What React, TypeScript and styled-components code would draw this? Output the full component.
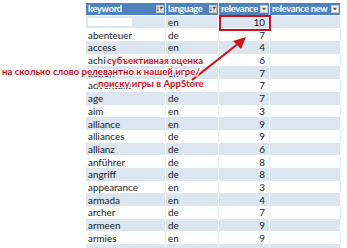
import React from 'react';
import styled, { createGlobalStyle } from 'styled-components';

const GlobalStyle = createGlobalStyle`
    html, body {
        margin: 0;
        padding: 0;
        background: #ffffff;
    }
`;

const PageStyle = styled.div`
    position: relative;
    width: 347px;
    height: 248px;
    overflow: hidden;
    background: #ffffff;
    padding: 3px 0 0 86px;
    box-sizing: border-box;
    font-family: 'Lato', 'Liberation Sans', sans-serif;
`;

const TableStyle = styled.div`
    display: grid;
    grid-template-columns: 80px 53px 51px 71px;
    grid-auto-rows: 12.7px;
    width: 255px;
`;

const HeadCellStyle = styled.div`
    display: flex;
    align-items: center;
    justify-content: space-between;
    background-color: #4f81bd;
    color: #ffffff;
    font-weight: 700;
    font-size: 9.3px;
    letter-spacing: -0.3px;
    padding: 0 1px 0 2px;
    border-right: 1px solid #ffffff;
    border-bottom: 1px solid #ffffff;
    white-space: nowrap;
    overflow: hidden;
`;

const FilterBoxStyle = styled.span`
    display: flex;
    align-items: center;
    justify-content: center;
    width: 8px;
    height: 8px;
    flex: 0 0 8px;
    margin-left: 1px;
    background: #f4f4f4;
    border: 1px solid #c6c6c6;
    box-sizing: border-box;
`;

const CellStyle = styled.div<{ $band: boolean; $num?: boolean }>`
    display: flex;
    align-items: center;
    justify-content: ${(p) => (p.$num ? 'flex-end' : 'flex-start')};
    background-color: ${(p) => (p.$band ? '#dce6f1' : '#ffffff')};
    border-right: 1px solid ${(p) => (p.$band ? '#ffffff' : '#e8eef6')};
    color: #1a1a1a;
    font-size: 9.9px;
    padding: ${(p) => (p.$num ? '0 4px 0 0' : '0 0 0 2px')};
    white-space: nowrap;
    overflow: hidden;
`;

const MaskStyle = styled.span`
    display: inline-block;
    width: 44px;
    height: 8px;
    background: #ffffff;
`;

const RedBoxStyle = styled.div`
    position: absolute;
    left: 219px;
    top: 15px;
    width: 52px;
    height: 16px;
    border: 2.5px solid #c4161c;
    box-sizing: border-box;
`;

const NoteStyle = styled.div<{ $left: number; $top: number }>`
    position: absolute;
    left: ${(p) => p.$left}px;
    top: ${(p) => p.$top}px;
    color: #d2121b;
    font-family: 'Lato', 'Liberation Sans', sans-serif;
    font-weight: 700;
    font-size: 9.6px;
    line-height: 11px;
    white-space: nowrap;
    text-shadow:
        1px 0 0 #fff, -1px 0 0 #fff, 0 1px 0 #fff, 0 -1px 0 #fff,
        1px 1px 0 #fff, -1px -1px 0 #fff, 1px -1px 0 #fff, -1px 1px 0 #fff;
`;

const ArrowStyle = styled.svg`
    position: absolute;
    left: 0;
    top: 0;
    pointer-events: none;
`;

type Row = [string, string, number];

const rows: Row[] = [
    ['', 'en', 10],
    ['abenteuer', 'de', 7],
    ['access', 'en', 4],
    ['achievement', 'en', 6],
    ['action', 'en', 7],
    ['adventure', 'de', 7],
    ['age', 'de', 7],
    ['aim', 'en', 3],
    ['alliance', 'en', 9],
    ['alliances', 'de', 9],
    ['allianz', 'de', 6],
    ['anführer', 'de', 8],
    ['angriff', 'de', 8],
    ['appearance', 'en', 3],
    ['armada', 'en', 4],
    ['archer', 'de', 7],
    ['armeen', 'de', 9],
    ['armies', 'en', 9],
    ['', '', 0],
];

const SortFilterIcon = () => (
    <svg width="6" height="6" viewBox="0 0 6 6">
        <path d="M1 0.5 V5 M0 4 L1 5.3 L2 4" stroke="#555" strokeWidth="0.8" fill="none" />
        <path d="M2.8 1 H5.8 L4.3 3 Z M4 3 V5.5" stroke="#555" strokeWidth="0.7" fill="#555" />
    </svg>
);

const DropIcon = () => (
    <svg width="6" height="6" viewBox="0 0 6 6">
        <path d="M0.8 1.8 H5.2 L3 4.4 Z" fill="#555" />
    </svg>
);

const headers: { title: string; icon: React.ReactNode }[] = [
    { title: 'keyword', icon: <SortFilterIcon /> },
    { title: 'language', icon: <SortFilterIcon /> },
    { title: 'relevance', icon: <DropIcon /> },
    { title: 'relevance new', icon: <DropIcon /> },
];

const App: React.FC = () => {
    return (
        <PageStyle>
            <GlobalStyle />
            <TableStyle>
                {headers.map((h) => (
                    <HeadCellStyle key={h.title}>
                        {h.title}
                        <FilterBoxStyle>{h.icon}</FilterBoxStyle>
                    </HeadCellStyle>
                ))}
                {rows.map(([word, lang, rel], i) => {
                    const band = i % 2 === 0;
                    return (
                        <React.Fragment key={i}>
                            <CellStyle $band={band}>{i === 0 ? <MaskStyle /> : word}</CellStyle>
                            <CellStyle $band={band}>{lang}</CellStyle>
                            <CellStyle $band={band} $num>
                                {rel || ''}
                            </CellStyle>
                            <CellStyle $band={band} />
                        </React.Fragment>
                    );
                })}
            </TableStyle>

            <RedBoxStyle />
            <ArrowStyle width="347" height="248">
                <line x1="192" y1="80" x2="239" y2="43" stroke="#d2121b" strokeWidth="2.2" />
                <path d="M246 37 L233 41 L241 49 Z" fill="#d2121b" />
            </ArrowStyle>

            <NoteStyle $left={107} $top={55}>субъективная оценка</NoteStyle>
            <NoteStyle $left={2} $top={66}>на сколько слово релевантно к нашей игре/</NoteStyle>
            <NoteStyle $left={98} $top={78}>поиску игры в AppStore</NoteStyle>
        </PageStyle>
    );
};

export default App;
